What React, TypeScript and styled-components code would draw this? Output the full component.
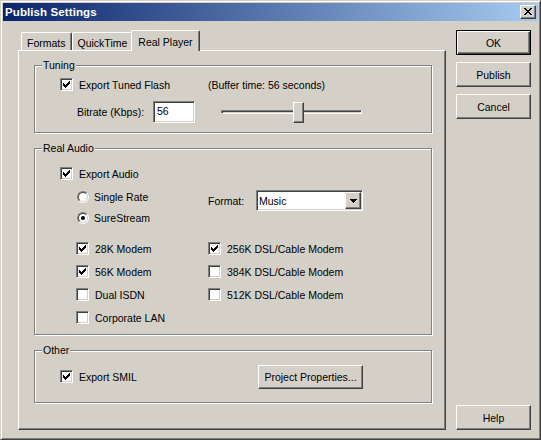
import React from "react";
import styled, { createGlobalStyle, css } from "styled-components";

const GlobalStyle = createGlobalStyle`
  html, body { margin: 0; padding: 0; background: #D4D0C8; }
  body {
    font-family: "Liberation Sans", Arial, sans-serif;
    font-size: 10.5px;
    color: #000;
  }
  * { box-sizing: border-box; }
`;

const raised = css`
  background: #d4d0c8;
  border: 1px solid;
  border-color: #ffffff #404040 #404040 #ffffff;
  box-shadow: inset -1px -1px 0 #808080;
`;

const sunken = css`
  background: #ffffff;
  border: 1px solid;
  border-color: #808080 #ffffff #ffffff #808080;
  box-shadow: inset 1px 1px 0 #404040, inset -1px -1px 0 #d4d0c8;
`;

const Window = styled.div`
  width: 541px;
  height: 440px;
  background: #d4d0c8;
  border: 1px solid;
  border-color: #d4d0c8 #404040 #404040 #d4d0c8;
  box-shadow: inset 1px 1px 0 #ffffff, inset -1px -1px 0 #808080;
  padding: 2px;
  display: flex;
  flex-direction: column;
`;

const TitleBar = styled.div`
  height: 18px;
  flex: none;
  display: flex;
  align-items: center;
  justify-content: space-between;
  padding: 0 2px 0 2px;
  background: linear-gradient(to right, #0a246a, #a6caf0);
`;

const Title = styled.span`
  color: #ffffff;
  font-weight: bold;
  font-size: 11.5px;
  letter-spacing: 0.1px;
`;

const CloseButton = styled.span`
  ${raised};
  width: 16px;
  height: 14px;
  display: flex;
  align-items: center;
  justify-content: center;
  padding-right: 1px;
  padding-bottom: 1px;
`;

const Body = styled.div`
  flex: 1;
  display: flex;
  padding: 9px 7px 7px 15px;
`;

const LeftColumn = styled.div`
  width: 428px;
  display: flex;
  flex-direction: column;
`;

const TabStrip = styled.div`
  height: 20px;
  flex: none;
  display: flex;
  align-items: flex-end;
  padding-left: 3px;
`;

const Tab = styled.div<{ $active?: boolean }>`
  height: 18px;
  display: flex;
  align-items: center;
  padding: 2px 5px 0;
  background: #d4d0c8;
  border-top: 1px solid #ffffff;
  border-left: 1px solid #ffffff;
  border-right: 1px solid #404040;
  box-shadow: inset -1px 0 0 #808080;
  border-radius: 2px 2px 0 0;
  white-space: nowrap;
  ${(p) =>
    p.$active &&
    css`
      height: 21px;
      padding: 1px 6px 0;
      margin: 0 -2px -1px;
      position: relative;
      z-index: 1;
    `}
`;

const Panel = styled.div`
  flex: 1;
  display: flex;
  flex-direction: column;
  gap: 15px;
  padding: 14px 13px 0 15px;
  background: #d4d0c8;
  border: 1px solid;
  border-color: #ffffff #404040 #404040 #ffffff;
  box-shadow: inset -1px -1px 0 #808080;
`;

const Group = styled.div<{ $h: number }>`
  position: relative;
  height: ${(p) => p.$h}px;
  flex: none;
  border: 1px solid #808080;
  box-shadow: inset 1px 1px 0 #ffffff, 1px 1px 0 #ffffff;
`;

const Legend = styled.span`
  position: absolute;
  top: -7px;
  left: 7px;
  padding: 0 1px;
  line-height: 13px;
  background: #d4d0c8;
`;

const TuningBody = styled.div`
  padding: 12px 0 0 25px;
`;

const TwoCol = styled.div<{ $first: number }>`
  display: grid;
  grid-template-columns: ${(p) => p.$first}px auto;
  align-items: center;
`;

const BitrateRow = styled.div`
  margin-top: 10px;
  height: 22px;
  display: flex;
  align-items: center;
  padding-left: 17px;
`;

const FieldLabel = styled.span<{ $w: number }>`
  width: ${(p) => p.$w}px;
  flex: none;
  white-space: nowrap;
`;

const TextField = styled.input`
  ${sunken};
  width: 42px;
  height: 22px;
  font: inherit;
  color: #000;
  padding: 0 0 2px 3px;
  outline: none;
`;

const SliderTrack = styled.div`
  ${sunken};
  background: #d4d0c8;
  position: relative;
  width: 141px;
  height: 4px;
  margin-left: 26px;
`;

const SliderThumb = styled.span`
  ${raised};
  position: absolute;
  top: -9px;
  width: 11px;
  height: 21px;
`;

const CheckRow = styled.label`
  display: flex;
  align-items: center;
  gap: 6px;
  height: 13px;
  white-space: nowrap;
`;

const CheckBox = styled.span`
  ${sunken};
  width: 13px;
  height: 13px;
  flex: none;
  display: flex;
  align-items: center;
  justify-content: center;
`;

const RadioRow = styled.label`
  display: flex;
  align-items: center;
  gap: 5px;
  height: 12px;
  white-space: nowrap;
`;

const RadioOuter = styled.span`
  width: 12px;
  height: 12px;
  margin-left: 1px;
  flex: none;
  border-radius: 50%;
  border: 1px solid;
  border-color: #808080 #ffffff #ffffff #808080;
  display: flex;
  align-items: center;
  justify-content: center;
`;

const RadioInner = styled.span<{ $on?: boolean }>`
  width: 10px;
  height: 10px;
  border-radius: 50%;
  border: 1px solid;
  border-color: #404040 #d4d0c8 #d4d0c8 #404040;
  background: #ffffff;
  display: flex;
  align-items: center;
  justify-content: center;
  &::after {
    content: "";
    width: 4px;
    height: 4px;
    border-radius: 50%;
    background: ${(p) => (p.$on ? "#000" : "transparent")};
  }
`;

const AudioBody = styled.div`
  padding: 18px 0 0 25px;
`;

const Indent = styled.div`
  padding-left: 16px;
  margin-top: 11px;
`;

const RadioStack = styled.div`
  display: flex;
  flex-direction: column;
  gap: 9px;
`;

const FormatRow = styled.div`
  display: flex;
  align-items: center;
  align-self: start;
  margin-top: -1px;
`;

const Select = styled.div`
  ${sunken};
  width: 107px;
  height: 21px;
  padding: 1px;
  display: flex;
  align-items: center;
`;

const SelectText = styled.span`
  flex: 1;
  padding-left: 1px;
`;

const DropButton = styled.span`
  ${raised};
  width: 16px;
  height: 17px;
  display: flex;
  align-items: center;
  justify-content: center;
`;

const ModemGrid = styled.div`
  margin-top: 18px;
  display: grid;
  grid-template-columns: 132px auto;
  grid-template-rows: repeat(4, 13px);
  grid-auto-flow: column;
  row-gap: 10px;
`;

const OtherBody = styled.div`
  height: 100%;
  padding-left: 25px;
  display: grid;
  grid-template-columns: 198px auto;
  align-items: center;
`;

const Button = styled.button<{ $default?: boolean; $w?: number; $h?: number }>`
  ${raised};
  width: ${(p) => p.$w ?? 75}px;
  height: ${(p) => p.$h ?? 25}px;
  flex: none;
  font: inherit;
  color: #000;
  padding: 0;
  cursor: default;
  ${(p) =>
    p.$default &&
    css`
      border-color: #000;
      box-shadow: inset 1px 1px 0 #ffffff, inset -1px -1px 0 #404040,
        inset -2px -2px 0 #808080;
    `}
`;

const RightColumn = styled.div`
  margin-left: 10px;
  width: 75px;
  display: flex;
  flex-direction: column;
  gap: 7px;
`;

const Spacer = styled.div`
  flex: 1;
`;

const CheckMark = () => (
  <svg width="7" height="7" viewBox="0 0 7 7" shapeRendering="crispEdges">
    <path
      d="M0 2h1v3H0z M1 3h1v3H1z M2 4h1v3H2z M3 3h1v3H3z M4 2h1v3H4z M5 1h1v3H5z M6 0h1v3H6z"
      fill="#000"
    />
  </svg>
);

const Check = ({ label, on }: { label: string; on?: boolean }) => (
  <CheckRow>
    <CheckBox>{on && <CheckMark />}</CheckBox>
    <span>{label}</span>
  </CheckRow>
);

const Radio = ({ label, on }: { label: string; on?: boolean }) => (
  <RadioRow>
    <RadioOuter>
      <RadioInner $on={on} />
    </RadioOuter>
    <span>{label}</span>
  </RadioRow>
);

const CloseGlyph = () => (
  <svg width="8" height="7" viewBox="0 0 8 7" shapeRendering="crispEdges">
    <path
      d="M0 0h2v1H0z M1 1h2v1H1z M2 2h2v1H2z M3 3h2v1H3z M2 4h2v1H2z M1 5h2v1H1z M0 6h2v1H0z M6 0h2v1H6z M5 1h2v1H5z M4 2h2v1H4z M4 4h2v1H4z M5 5h2v1H5z M6 6h2v1H6z"
      fill="#000"
    />
  </svg>
);

const DownArrow = () => (
  <svg width="7" height="4" viewBox="0 0 7 4" shapeRendering="crispEdges">
    <path d="M0 0h7v1H0z M1 1h5v1H1z M2 2h3v1H2z M3 3h1v1H3z" fill="#000" />
  </svg>
);

const sliderValue = 56;
const sliderMax = 100;

export default function App() {
  const thumbLeft = Math.floor((sliderValue / sliderMax) * (139 - 11));
  return (
    <>
      <GlobalStyle />
      <Window>
        <TitleBar>
          <Title>Publish Settings</Title>
          <CloseButton>
            <CloseGlyph />
          </CloseButton>
        </TitleBar>
        <Body>
          <LeftColumn>
            <TabStrip>
              <Tab>Formats</Tab>
              <Tab>QuickTime</Tab>
              <Tab $active>Real Player</Tab>
            </TabStrip>
            <Panel>
              <Group $h={68}>
                <Legend>Tuning</Legend>
                <TuningBody>
                  <TwoCol $first={148}>
                    <Check label="Export Tuned Flash" on />
                    <span>(Buffer time: 56 seconds)</span>
                  </TwoCol>
                  <BitrateRow>
                    <FieldLabel $w={76}>Bitrate (Kbps):</FieldLabel>
                    <TextField readOnly value="56" />
                    <SliderTrack>
                      <SliderThumb style={{ left: thumbLeft }} />
                    </SliderTrack>
                  </BitrateRow>
                </TuningBody>
              </Group>
              <Group $h={187}>
                <Legend>Real Audio</Legend>
                <AudioBody>
                  <Check label="Export Audio" on />
                  <Indent>
                    <TwoCol $first={132}>
                      <RadioStack>
                        <Radio label="Single Rate" />
                        <Radio label="SureStream" on />
                      </RadioStack>
                      <FormatRow>
                        <FieldLabel $w={48}>Format:</FieldLabel>
                        <Select>
                          <SelectText>Music</SelectText>
                          <DropButton>
                            <DownArrow />
                          </DropButton>
                        </Select>
                      </FormatRow>
                    </TwoCol>
                    <ModemGrid>
                      <Check label="28K Modem" on />
                      <Check label="56K Modem" on />
                      <Check label="Dual ISDN" />
                      <Check label="Corporate LAN" />
                      <Check label="256K DSL/Cable Modem" on />
                      <Check label="384K DSL/Cable Modem" />
                      <Check label="512K DSL/Cable Modem" />
                    </ModemGrid>
                  </Indent>
                </AudioBody>
              </Group>
              <Group $h={53}>
                <Legend>Other</Legend>
                <OtherBody>
                  <Check label="Export SMIL" on />
                  <Button $w={105} $h={24}>
                    Project Properties...
                  </Button>
                </OtherBody>
              </Group>
            </Panel>
          </LeftColumn>
          <RightColumn>
            <Button $default>OK</Button>
            <Button>Publish</Button>
            <Button>Cancel</Button>
            <Spacer />
            <Button>Help</Button>
          </RightColumn>
        </Body>
      </Window>
    </>
  );
}
